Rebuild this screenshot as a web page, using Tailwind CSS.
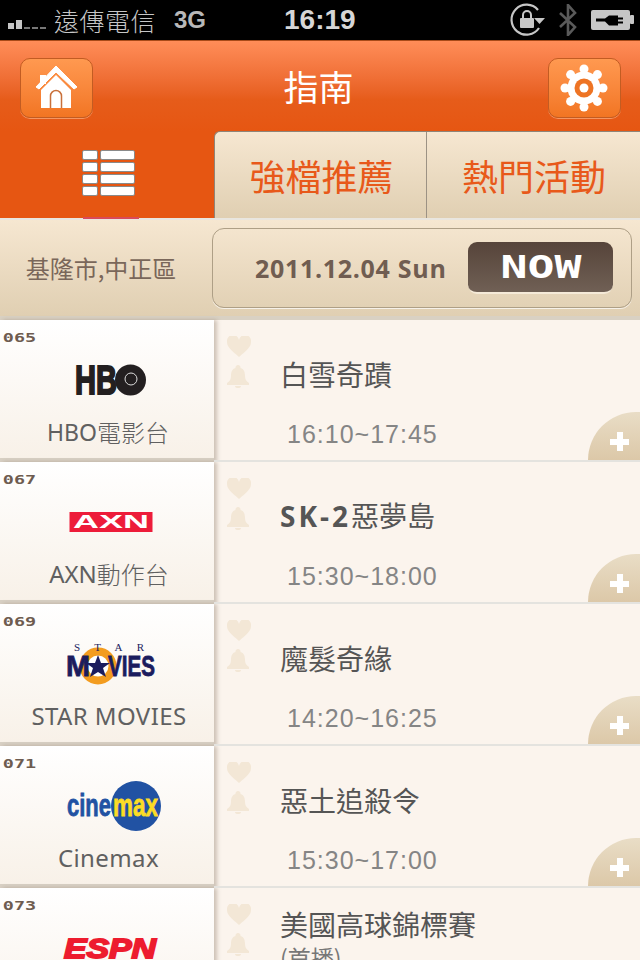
<!DOCTYPE html>
<html lang="zh-Hant">

<head>
  <meta charset="UTF-8">
  <meta name="viewport" content="width=device-width, initial-scale=1.0">
  <title>指南</title>
  <script src="https://cdn.jsdelivr.net/npm/@tailwindcss/browser@4"></script>
</head>

<body class="bg-black">
  <div class="w-[640px] h-[960px] overflow-hidden flex flex-col font-['Liberation_Sans','Noto_Sans_CJK_TC',sans-serif]">

    <!-- status bar -->
    <div class="h-[40px] shrink-0 bg-black relative flex items-center text-[#c6c6c6]">
      <div class="flex items-end gap-[2px] ml-[8px] w-[40px] h-[10px] mt-[8px]">
        <span class="w-[6px] h-[6px] bg-[#c6c6c6]"></span>
        <span class="w-[6px] h-[9px] bg-[#c6c6c6]"></span>
        <span class="w-[6px] h-[2px] bg-[#777]"></span>
        <span class="w-[6px] h-[2px] bg-[#777]"></span>
        <span class="w-[6px] h-[2px] bg-[#777]"></span>
      </div>
      <span class="ml-[6px] text-[25px] leading-none tracking-[0.5px] font-['Noto_Sans_CJK_TC',sans-serif] font-light">遠傳電信</span>
      <span class="ml-[18px] text-[24px] leading-none font-bold text-[#b8b8b8]">3G</span>
      <span class="ml-[78px] text-[28px] leading-none font-bold text-[#d6d6d6]">16:19</span>
      <svg class="ml-[154px]" width="36" height="36" viewBox="0 0 36 36">
        <path d="M28 8A15 15 0 1 0 29 26" fill="none" stroke="#c6c6c6" stroke-width="2.2" />
        <path d="M24 16h11l-5.500 6z" fill="#c6c6c6" />
        <rect x="10" y="16" width="14" height="10" rx="1" fill="#c6c6c6" />
        <path d="M13 16v-3a4 4 0 0 1 8 0v3" fill="none" stroke="#c6c6c6" stroke-width="2" />
      </svg>
      <svg class="ml-[12px]" width="20" height="32" viewBox="0 0 20 32">
        <path d="M2 9 17 23 10 31V1l7 8L2 23" fill="none" stroke="#5a5a5a" stroke-width="2.600" />
      </svg>
      <svg class="ml-[13px]" width="44" height="22" viewBox="0 0 44 22">
        <rect x="0" y="1" width="39" height="20" rx="2" fill="#c6c6c6" />
        <rect x="39" y="6" width="4" height="9" rx="1" fill="#c6c6c6" />
        <path d="M5 9.500h9l4-3h9v2h5v2h-5v2h5v2h-5v2h-9l-4-4h-9z" fill="#000" />
      </svg>
    </div>

    <!-- title bar -->
    <div class="h-[91px] shrink-0 border-t border-[#a84a18] bg-gradient-to-b from-[#ff8d58] via-[#e65c1a] via-65% to-[#e65612] flex items-center justify-between pl-[20px] pr-[19px] pt-[4px]">
      <button class="w-[73px] h-[60px] rounded-[10px] border border-[#c25c22] bg-gradient-to-b from-[#ff9950] to-[#f27522] flex items-center justify-center shadow-[0_1px_0_rgba(255,190,150,0.6)]">
        <svg width="44" height="46" viewBox="0 0 44 46">
          <path d="M5 10h6v9H5z" fill="#fff" />
          <path d="M21 1 1 22l3 2 17-17 18 17 3-2z" fill="#fff" stroke="#fff" stroke-width="1" stroke-linejoin="round" />
          <path d="M21 10 6 25v18h30V25z" fill="#fff" />
          <path d="M15.500 43V31a5.500 5.500 0 0 1 11 0v12" fill="none" stroke="#c9703a" stroke-width="1.500" />
        </svg>
      </button>
      <h1 class="text-[35px] leading-none text-white mr-[4px] mb-[6px] font-['Noto_Sans_CJK_TC',sans-serif] font-normal">指南</h1>
      <button class="w-[73px] h-[60px] rounded-[10px] border border-[#c25c22] bg-gradient-to-b from-[#ff9950] to-[#f27522] flex items-center justify-center shadow-[0_1px_0_rgba(255,190,150,0.6)]">
        <svg width="48" height="48" viewBox="-24 -24 48 48">
          <circle r="16.500" fill="#fff" />
          <circle cx="0" cy="-19" r="4.500" fill="#fff" />
          <circle cx="13.400" cy="-13.400" r="4.500" fill="#fff" />
          <circle cx="19" cy="0" r="4.500" fill="#fff" />
          <circle cx="13.400" cy="13.400" r="4.500" fill="#fff" />
          <circle cx="0" cy="19" r="4.500" fill="#fff" />
          <circle cx="-13.400" cy="13.400" r="4.500" fill="#fff" />
          <circle cx="-19" cy="0" r="4.500" fill="#fff" />
          <circle cx="-13.400" cy="-13.400" r="4.500" fill="#fff" />
          <circle r="9.500" fill="#ee7424" />
          <circle r="4.500" fill="#fff" />
        </svg>
      </button>
    </div>

    <!-- tabs -->
    <div class="h-[87px] shrink-0 bg-[#e65612] flex">
      <div class="w-[214px] relative flex items-start justify-center pt-[19px] pl-[3px]">
        <div class="grid grid-cols-[16px_35px] gap-[2px] w-[53px]">
          <span class="h-[10px] bg-white border border-[#8a8a8a] rounded-[2px]"></span>
          <span class="h-[10px] bg-white border border-[#8a8a8a] rounded-[2px]"></span>
          <span class="h-[10px] bg-white border border-[#8a8a8a] rounded-[2px]"></span>
          <span class="h-[10px] bg-white border border-[#8a8a8a] rounded-[2px]"></span>
          <span class="h-[10px] bg-white border border-[#8a8a8a] rounded-[2px]"></span>
          <span class="h-[10px] bg-white border border-[#8a8a8a] rounded-[2px]"></span>
          <span class="h-[10px] bg-white border border-[#8a8a8a] rounded-[2px]"></span>
          <span class="h-[10px] bg-white border border-[#8a8a8a] rounded-[2px]"></span>
        </div>
        <span class="absolute left-[83px] bottom-[-1px] w-[56px] h-[2px] bg-[#d94a5a]"></span>
      </div>
      <div class="w-[426px] flex rounded-tl-[6px] overflow-hidden border-t border-l border-[#8f8578] bg-gradient-to-b from-[#f6e7d1] to-[#e0cfb2] text-[36px] leading-none text-[#e8591a] font-['Noto_Sans_CJK_TC',sans-serif] font-normal">
        <div class="w-[212px] pl-[2px] flex items-center justify-center border-r border-[#9c9284]">強檔推薦</div>
        <div class="flex-1 pl-[1px] flex items-center justify-center">熱門活動</div>
      </div>
    </div>
    <div class="h-[2px] shrink-0 bg-[#e9e6df]"></div>

    <!-- location and date -->
    <div class="h-[100px] shrink-0 bg-gradient-to-b from-[#f6e7d1] to-[#e0cfb2] border-b-[4px] border-[#d9d1c3] flex pt-[8px] pb-[8px] pr-[8px]">
      <div class="w-[212px] flex items-center justify-center text-[24px] leading-none text-[#7a675a] pr-[10px] font-['Noto_Sans_CJK_TC',sans-serif]">基隆市,中正區</div>
      <div class="flex-1 rounded-[12px] border border-[#ae9f86] shadow-[0_1px_0_rgba(255,255,255,0.7)] flex items-center pl-[42px]">
        <span class="font-['Open_Sans',sans-serif] font-bold text-[25px] leading-none tracking-[0.7px] text-[#705d51]">2011.12.04 Sun</span>
        <span class="ml-auto mr-[18px] w-[145px] h-[52px] rounded-[9px] bg-gradient-to-b from-[#56443a] to-[#706055] border-b-2 border-[#f5ead8] flex items-center justify-center">
          <span class="text-white font-['DejaVu_Sans_Mono',monospace] font-bold text-[32px] leading-none scale-x-[1.4]">NOW</span>
        </span>
      </div>
    </div>

    <!-- channel rows -->
    <div class="flex flex-col">

      <div class="h-[142px] shrink-0 flex bg-[#fbf4ed]">
        <div class="w-[214px] shrink-0 bg-gradient-to-b from-white to-[#f8f1e8] border-b-[4px] border-[#d8d0c4] shadow-[3px_0_4px_rgba(120,100,80,0.35)] flex flex-col">
          <div class="h-[24px] pl-[2px] pt-[12px] text-[13px] leading-[11px] font-bold text-[#6e5c50] font-['DejaVu_Sans_Mono',monospace] origin-left scale-x-[1.42]">065</div>
          <svg class="w-[214px] h-[66px] shrink-0" viewBox="0 0 214 66">
            <text x="75" y="50" font-family="Liberation Sans" font-weight="700" font-size="41" fill="#231f20" stroke="#231f20" stroke-width="2" textLength="42" lengthAdjust="spacingAndGlyphs">HB</text>
            <circle cx="130.500" cy="36" r="15.500" fill="#231f20" />
            <circle cx="131" cy="35" r="6" fill="none" stroke="#ddd" stroke-width="1" />
          </svg>
          <div class="h-[44px] shrink-0 flex items-center justify-center pl-[2px] text-[23px] leading-none text-[#606060] font-['Noto_Sans',sans-serif]">HBO<span class="text-[24px] font-['Noto_Sans_CJK_TC',sans-serif] font-light">電影台</span></div>
        </div>
        <div class="flex-1 relative flex border-b-2 border-[#e4e3df] overflow-hidden">
          <div class="w-[50px] pl-[13px] pt-[16px] flex flex-col gap-[8px]">
            <svg width="24" height="21" viewBox="0 0 24 21"><path d="M12 21C4 14 0 11 0 6a6 6 0 0 1 12-2 6 6 0 0 1 12 2c0 5-4 8-12 15z" fill="#f3e7d6" /></svg>
            <svg width="22" height="23" viewBox="0 0 22 23"><path d="M11 0a2.500 2.500 0 0 1 2.500 3C17 4 18 7 18 11c0 3 1 5 4 7v2H0v-2c3-2 4-4 4-7 0-4 1-7 4.500-8A2.500 2.500 0 0 1 11 0zM8 21h6a3 2 0 0 1-6 0z" fill="#f3e7d6" /></svg>
          </div>
          <div class="flex-1 flex flex-col pl-[16px]">
            <div class="h-[90px] mt-[9px] flex flex-col justify-center text-[28px] leading-[33px] text-[#555] font-['Noto_Sans_CJK_TC',sans-serif]">白雪奇蹟</div>
            <div class="h-[28px] mt-[1px] pl-[7px] text-[25px] leading-[28px] tracking-[1px] text-[#858585]">16:10~17:45</div>
          </div>
          <div class="absolute right-0 bottom-0 w-[52px] h-[48px] rounded-tl-[52px] bg-gradient-to-b from-[#e9ddc6] to-[#dcc8a8]">
            <span class="absolute left-[22px] top-[27px] w-[19px] h-[6px] bg-white"></span>
            <span class="absolute left-[29px] top-[20px] w-[6px] h-[19px] bg-white"></span>
          </div>
        </div>
      </div>

      <div class="h-[142px] shrink-0 flex bg-[#fbf4ed]">
        <div class="w-[214px] shrink-0 bg-gradient-to-b from-white to-[#f8f1e8] border-b-[4px] border-[#d8d0c4] shadow-[3px_0_4px_rgba(120,100,80,0.35)] flex flex-col">
          <div class="h-[24px] pl-[2px] pt-[12px] text-[13px] leading-[11px] font-bold text-[#6e5c50] font-['DejaVu_Sans_Mono',monospace] origin-left scale-x-[1.42]">067</div>
          <svg class="w-[214px] h-[66px] shrink-0" viewBox="0 0 214 66">
            <rect x="69.500" y="26" width="83" height="20" fill="#ed1c3a" />
            <text x="73" y="42" font-family="Liberation Sans" font-weight="700" font-size="19" fill="#fff" textLength="76" lengthAdjust="spacingAndGlyphs">AXN</text>
          </svg>
          <div class="h-[44px] shrink-0 flex items-center justify-center pl-[4px] text-[24px] leading-none text-[#606060] font-['Noto_Sans',sans-serif]">AXN<span class="font-['Noto_Sans_CJK_TC',sans-serif] font-light">動作台</span></div>
        </div>
        <div class="flex-1 relative flex border-b-2 border-[#e4e3df] overflow-hidden">
          <div class="w-[50px] pl-[13px] pt-[16px] flex flex-col gap-[8px]">
            <svg width="24" height="21" viewBox="0 0 24 21"><path d="M12 21C4 14 0 11 0 6a6 6 0 0 1 12-2 6 6 0 0 1 12 2c0 5-4 8-12 15z" fill="#f3e7d6" /></svg>
            <svg width="22" height="23" viewBox="0 0 22 23"><path d="M11 0a2.500 2.500 0 0 1 2.500 3C17 4 18 7 18 11c0 3 1 5 4 7v2H0v-2c3-2 4-4 4-7 0-4 1-7 4.500-8A2.500 2.500 0 0 1 11 0zM8 21h6a3 2 0 0 1-6 0z" fill="#f3e7d6" /></svg>
          </div>
          <div class="flex-1 flex flex-col pl-[16px]">
            <div class="h-[90px] mt-[9px] flex flex-col justify-center text-[28px] leading-[33px] text-[#555] font-['Noto_Sans_CJK_TC',sans-serif]"><div><span class="font-['Open_Sans',sans-serif] font-bold tracking-[3px]">SK-2</span>惡夢島</div></div>
            <div class="h-[28px] mt-[1px] pl-[7px] text-[25px] leading-[28px] tracking-[1px] text-[#858585]">15:30~18:00</div>
          </div>
          <div class="absolute right-0 bottom-0 w-[52px] h-[48px] rounded-tl-[52px] bg-gradient-to-b from-[#e9ddc6] to-[#dcc8a8]">
            <span class="absolute left-[22px] top-[27px] w-[19px] h-[6px] bg-white"></span>
            <span class="absolute left-[29px] top-[20px] w-[6px] h-[19px] bg-white"></span>
          </div>
        </div>
      </div>

      <div class="h-[142px] shrink-0 flex bg-[#fbf4ed]">
        <div class="w-[214px] shrink-0 bg-gradient-to-b from-white to-[#f8f1e8] border-b-[4px] border-[#d8d0c4] shadow-[3px_0_4px_rgba(120,100,80,0.35)] flex flex-col">
          <div class="h-[24px] pl-[2px] pt-[12px] text-[13px] leading-[11px] font-bold text-[#6e5c50] font-['DejaVu_Sans_Mono',monospace] origin-left scale-x-[1.42]">069</div>
          <svg class="w-[214px] h-[66px] shrink-0" viewBox="0 0 214 66">
            <circle cx="98" cy="38" r="14.500" fill="#fff" stroke="#f39c1f" stroke-width="8" />
            <polygon points="98,27 101,35 110,35 103,40 106,49 98,44 90,49 93,40 86,35 95,35" fill="#1b1c5e" />
            <text x="74" y="23" font-family="Liberation Serif" font-size="11" fill="#1b1c5e" textLength="70">STAR</text>
            <text x="66" y="48" font-family="Liberation Sans" font-weight="700" font-size="29" fill="#1b1c5e" stroke="#1b1c5e" stroke-width="0.800" textLength="24" lengthAdjust="spacingAndGlyphs">M</text>
            <text x="108" y="48" font-family="Liberation Sans" font-weight="700" font-size="29" fill="#1b1c5e" stroke="#1b1c5e" stroke-width="0.800" textLength="47" lengthAdjust="spacingAndGlyphs">VIES</text>
          </svg>
          <div class="h-[44px] shrink-0 flex items-center justify-center pl-[4px] text-[24px] leading-none tracking-[0.4px] text-[#606060] font-['Noto_Sans',sans-serif]">STAR MOVIES</div>
        </div>
        <div class="flex-1 relative flex border-b-2 border-[#e4e3df] overflow-hidden">
          <div class="w-[50px] pl-[13px] pt-[16px] flex flex-col gap-[8px]">
            <svg width="24" height="21" viewBox="0 0 24 21"><path d="M12 21C4 14 0 11 0 6a6 6 0 0 1 12-2 6 6 0 0 1 12 2c0 5-4 8-12 15z" fill="#f3e7d6" /></svg>
            <svg width="22" height="23" viewBox="0 0 22 23"><path d="M11 0a2.500 2.500 0 0 1 2.500 3C17 4 18 7 18 11c0 3 1 5 4 7v2H0v-2c3-2 4-4 4-7 0-4 1-7 4.500-8A2.500 2.500 0 0 1 11 0zM8 21h6a3 2 0 0 1-6 0z" fill="#f3e7d6" /></svg>
          </div>
          <div class="flex-1 flex flex-col pl-[16px]">
            <div class="h-[90px] mt-[9px] flex flex-col justify-center text-[28px] leading-[33px] text-[#555] font-['Noto_Sans_CJK_TC',sans-serif]">魔髮奇緣</div>
            <div class="h-[28px] mt-[1px] pl-[7px] text-[25px] leading-[28px] tracking-[1px] text-[#858585]">14:20~16:25</div>
          </div>
          <div class="absolute right-0 bottom-0 w-[52px] h-[48px] rounded-tl-[52px] bg-gradient-to-b from-[#e9ddc6] to-[#dcc8a8]">
            <span class="absolute left-[22px] top-[27px] w-[19px] h-[6px] bg-white"></span>
            <span class="absolute left-[29px] top-[20px] w-[6px] h-[19px] bg-white"></span>
          </div>
        </div>
      </div>

      <div class="h-[142px] shrink-0 flex bg-[#fbf4ed]">
        <div class="w-[214px] shrink-0 bg-gradient-to-b from-white to-[#f8f1e8] border-b-[4px] border-[#d8d0c4] shadow-[3px_0_4px_rgba(120,100,80,0.35)] flex flex-col">
          <div class="h-[24px] pl-[2px] pt-[12px] text-[13px] leading-[11px] font-bold text-[#6e5c50] font-['DejaVu_Sans_Mono',monospace] origin-left scale-x-[1.42]">071</div>
          <svg class="w-[214px] h-[66px] shrink-0" viewBox="0 0 214 66">
            <circle cx="136" cy="36" r="25" fill="#2152a3" />
            <text x="67" y="46" font-family="Liberation Sans" font-weight="700" font-size="32" fill="#2152a3" stroke="#2152a3" stroke-width="0.800" textLength="44" lengthAdjust="spacingAndGlyphs">cine</text>
            <text x="113" y="46" font-family="Liberation Sans" font-weight="700" font-size="32" fill="#fcdc25" stroke="#fcdc25" stroke-width="0.800" textLength="45" lengthAdjust="spacingAndGlyphs">max</text>
          </svg>
          <div class="h-[44px] shrink-0 flex items-center justify-center pl-[3px] text-[24px] leading-none tracking-[0.4px] text-[#606060] font-['Noto_Sans',sans-serif]">Cinemax</div>
        </div>
        <div class="flex-1 relative flex border-b-2 border-[#e4e3df] overflow-hidden">
          <div class="w-[50px] pl-[13px] pt-[16px] flex flex-col gap-[8px]">
            <svg width="24" height="21" viewBox="0 0 24 21"><path d="M12 21C4 14 0 11 0 6a6 6 0 0 1 12-2 6 6 0 0 1 12 2c0 5-4 8-12 15z" fill="#f3e7d6" /></svg>
            <svg width="22" height="23" viewBox="0 0 22 23"><path d="M11 0a2.500 2.500 0 0 1 2.500 3C17 4 18 7 18 11c0 3 1 5 4 7v2H0v-2c3-2 4-4 4-7 0-4 1-7 4.500-8A2.500 2.500 0 0 1 11 0zM8 21h6a3 2 0 0 1-6 0z" fill="#f3e7d6" /></svg>
          </div>
          <div class="flex-1 flex flex-col pl-[16px]">
            <div class="h-[90px] mt-[9px] flex flex-col justify-center text-[28px] leading-[33px] text-[#555] font-['Noto_Sans_CJK_TC',sans-serif]">惡土追殺令</div>
            <div class="h-[28px] mt-[1px] pl-[7px] text-[25px] leading-[28px] tracking-[1px] text-[#858585]">15:30~17:00</div>
          </div>
          <div class="absolute right-0 bottom-0 w-[52px] h-[48px] rounded-tl-[52px] bg-gradient-to-b from-[#e9ddc6] to-[#dcc8a8]">
            <span class="absolute left-[22px] top-[27px] w-[19px] h-[6px] bg-white"></span>
            <span class="absolute left-[29px] top-[20px] w-[6px] h-[19px] bg-white"></span>
          </div>
        </div>
      </div>

      <div class="h-[142px] shrink-0 flex bg-[#fbf4ed]">
        <div class="w-[214px] shrink-0 bg-gradient-to-b from-white to-[#f8f1e8] border-b-[4px] border-[#d8d0c4] shadow-[3px_0_4px_rgba(120,100,80,0.35)] flex flex-col">
          <div class="h-[24px] pl-[2px] pt-[12px] text-[13px] leading-[11px] font-bold text-[#6e5c50] font-['DejaVu_Sans_Mono',monospace] origin-left scale-x-[1.42]">073</div>
          <svg class="w-[214px] h-[66px] shrink-0" viewBox="0 0 214 66">
            <text x="64" y="46" font-family="Liberation Sans" font-weight="700" font-style="italic" font-size="28" fill="#ed1c2e" stroke="#ed1c2e" stroke-width="1.800" textLength="92" lengthAdjust="spacingAndGlyphs">ESPN</text>
          </svg>
        </div>
        <div class="flex-1 relative flex overflow-hidden">
          <div class="w-[50px] pl-[13px] pt-[16px] flex flex-col gap-[8px]">
            <svg width="24" height="21" viewBox="0 0 24 21"><path d="M12 21C4 14 0 11 0 6a6 6 0 0 1 12-2 6 6 0 0 1 12 2c0 5-4 8-12 15z" fill="#f3e7d6" /></svg>
            <svg width="22" height="23" viewBox="0 0 22 23"><path d="M11 0a2.500 2.500 0 0 1 2.500 3C17 4 18 7 18 11c0 3 1 5 4 7v2H0v-2c3-2 4-4 4-7 0-4 1-7 4.500-8A2.500 2.500 0 0 1 11 0zM8 21h6a3 2 0 0 1-6 0z" fill="#f3e7d6" /></svg>
          </div>
          <div class="flex-1 flex flex-col pl-[16px]">
            <div class="h-[90px] mt-[8px] flex flex-col justify-center text-[28px] leading-[33px] text-[#555] font-['Noto_Sans_CJK_TC',sans-serif]">
              <div>美國高球錦標賽</div>
              <div class="text-[23px] text-[#777]">(首播)</div>
            </div>
          </div>
        </div>
      </div>

    </div>
  </div>
</body>

</html>
